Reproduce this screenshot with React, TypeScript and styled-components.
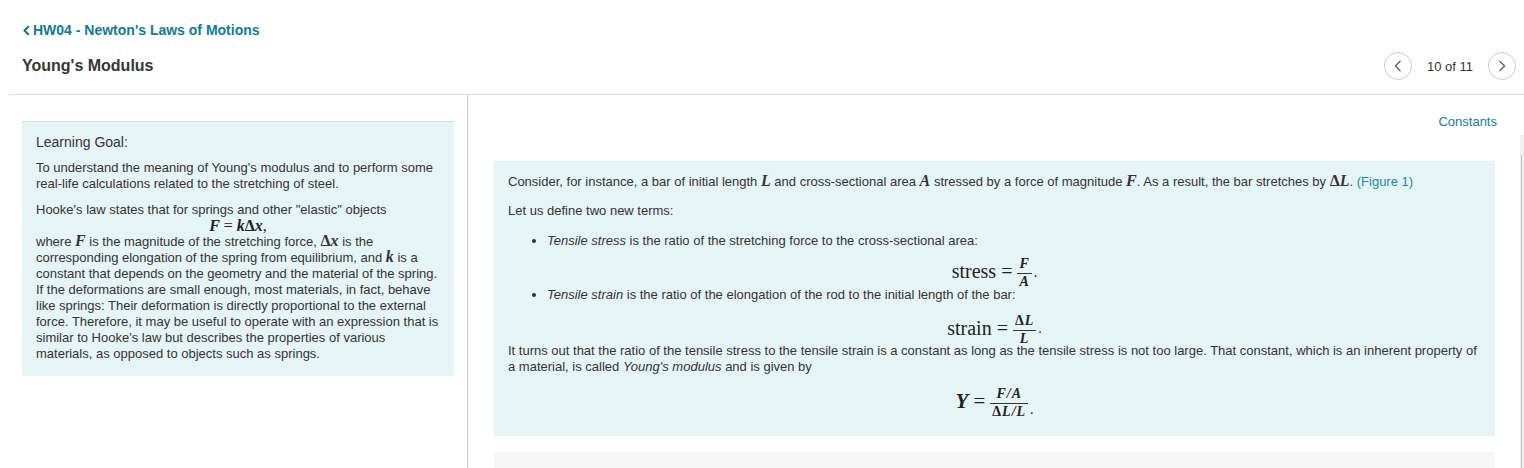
import React from "react";
import styled, { createGlobalStyle } from "styled-components";

const GlobalStyle = createGlobalStyle`
  html, body {
    margin: 0;
    padding: 0;
    background: #fff;
  }
  body {
    font-family: "Liberation Sans", Arial, sans-serif;
    color: #333;
    overflow: hidden;
  }
`;

const Header = styled.header`
  padding: 20px 8px 14px 21px;
`;

const BackLink = styled.a`
  display: inline-flex;
  align-items: center;
  gap: 1px;
  height: 20px;
  font-size: 14px;
  font-weight: 700;
  color: #0c7b9c;
  text-decoration: none;
`;

const TitleRow = styled.div`
  display: flex;
  align-items: center;
  justify-content: space-between;
  height: 28px;
  margin-top: 12px;
  padding-left: 1px;
`;

const Title = styled.h1`
  margin: 0;
  font-size: 16px;
  font-weight: 700;
  color: #363636;
`;

const Pager = styled.div`
  display: flex;
  align-items: center;
  gap: 15px;
  font-size: 13px;
  color: #333;
`;

const RoundButton = styled.button`
  width: 28px;
  height: 28px;
  padding: 0;
  border: 1px solid #cbcbcb;
  border-radius: 50%;
  background: #fff;
  display: flex;
  align-items: center;
  justify-content: center;
  color: #5a6470;
`;

const Rule = styled.hr`
  margin: 0 0 0 9px;
  border: 0;
  border-top: 1px solid #dcdcdc;
`;

const Main = styled.main`
  display: flex;
  height: 373px;
  overflow: hidden;
`;

const LeftColumn = styled.aside`
  box-sizing: border-box;
  width: 459px;
  margin-left: 9px;
  padding: 26px 13px 0 13px;
  border-right: 1px solid #c5cfda;
`;

const RightColumn = styled.section`
  flex: 1;
  padding: 19px 25px 0 26px;
`;

const ScrollTrack = styled.div`
  width: 4px;
  margin-top: 40px;
  padding-top: 20px;
  background: #f1f1f1;
`;

const ScrollThumb = styled.div`
  width: 1px;
  height: 100%;
  margin-left: 1px;
  background: #c4c4c4;
`;

const InfoBox = styled.div<{ $top?: boolean }>`
  background: #e5f5f6;
  border-top: ${(p) => (p.$top ? "1px solid #dcdcdc" : "0")};
  padding: ${(p) => (p.$top ? "11px 14px 14px" : "13px 14px 12px")};
  font-size: 13px;
  line-height: 16px;
`;

const GoalTitle = styled.h2`
  margin: 0 0 9px;
  font-size: 14px;
  line-height: 18px;
  font-weight: 400;
  color: #333;
`;

const Para = styled.p<{ $gap?: number }>`
  margin: 0 0 ${(p) => p.$gap ?? 0}px;
`;

const ConstantsLink = styled.a`
  display: block;
  text-align: right;
  margin-right: -2px;
  font-size: 13px;
  line-height: 16px;
  color: #127c9e;
  text-decoration: none;
`;

const ProblemBox = styled(InfoBox)`
  margin-top: 31px;
`;

const FigureLink = styled.a`
  color: #1d86ac;
  text-decoration: none;
`;

const List = styled.ul<{ $top: number }>`
  margin: ${(p) => p.$top}px 0 0;
  padding-left: 39px;
  list-style: disc;
`;

const Em = styled.em`
  font-style: italic;
`;

const Var = styled.span<{ $size?: number }>`
  font-family: "Liberation Serif", "Times New Roman", serif;
  font-style: italic;
  font-weight: 700;
  font-size: ${(p) => p.$size ?? 16}px;
  line-height: 0;
`;

const Upright = styled.span<{ $size?: number }>`
  font-family: "Liberation Serif", "Times New Roman", serif;
  font-style: normal;
  font-weight: 700;
  font-size: ${(p) => p.$size ?? 16}px;
  line-height: 0;
`;

const Display = styled.div<{ $height: number; $size: number; $shift: number }>`
  box-sizing: border-box;
  height: ${(p) => p.$height}px;
  padding-top: ${(p) => p.$shift}px;
  display: flex;
  align-items: center;
  justify-content: center;
  gap: 5px;
  font-family: "Liberation Serif", "Times New Roman", serif;
  font-size: ${(p) => p.$size}px;
  line-height: 1;
  color: #222;
`;

const InlineDisplay = styled.div`
  text-align: center;
  font-family: "Liberation Serif", "Times New Roman", serif;
  font-size: 16px;
  line-height: 16px;
  color: #222;
`;

const Frac = styled.span<{ $size: number }>`
  display: inline-flex;
  flex-direction: column;
  align-items: center;
  font-family: "Liberation Serif", "Times New Roman", serif;
  font-style: italic;
  font-weight: 700;
  font-size: ${(p) => p.$size}px;
  line-height: 1.05;
  letter-spacing: 1px;
  margin-top: 4px;
`;

const Num = styled.span`
  padding: 0 2px 1px;
  border-bottom: 1px solid #333;
  align-self: stretch;
  text-align: center;
`;

const Den = styled.span`
  padding: 1px 2px 0;
`;

const Dot = styled.span`
  align-self: flex-end;
  margin-left: -3px;
  margin-bottom: 7px;
  font-size: 14px;
`;

const GrayBlock = styled.div`
  margin-top: 16px;
  height: 40px;
  background: #f7f7f7;
`;

const ChevronLeft = ({ size = 14, stroke = 1.6 }: { size?: number; stroke?: number }) => (
  <svg width={size} height={size} viewBox="0 0 16 16" fill="none">
    <path d="M10.5 2.5 L5 8 L10.5 13.5" stroke="currentColor" strokeWidth={stroke} strokeLinecap="round" strokeLinejoin="round" />
  </svg>
);

const ChevronRight = () => (
  <svg width={14} height={14} viewBox="0 0 16 16" fill="none">
    <path d="M5.5 2.5 L11 8 L5.5 13.5" stroke="currentColor" strokeWidth={1.6} strokeLinecap="round" strokeLinejoin="round" />
  </svg>
);

export default function App() {
  return (
    <>
      <GlobalStyle />
      <Header>
        <BackLink href="#">
          <ChevronLeft size={11} stroke={3.2} />
          HW04 - Newton's Laws of Motions
        </BackLink>
        <TitleRow>
          <Title>Young's Modulus</Title>
          <Pager>
            <RoundButton aria-label="Previous">
              <ChevronLeft />
            </RoundButton>
            <span>10 of 11</span>
            <RoundButton aria-label="Next">
              <ChevronRight />
            </RoundButton>
          </Pager>
        </TitleRow>
      </Header>
      <Rule />
      <Main>
        <LeftColumn>
          <InfoBox $top>
            <GoalTitle>Learning Goal:</GoalTitle>
            <Para $gap={10}>
              To understand the meaning of Young's modulus and to perform some real&#8209;life calculations related
              to the stretching of steel.
            </Para>
            <Para>Hooke's law states that for springs and other "elastic" objects</Para>
            <InlineDisplay>
              <Var>F</Var> = <Var>k</Var>
              <Upright>Δ</Upright>
              <Var>x</Var>,
            </InlineDisplay>
            <Para>
              where <Var>F</Var> is the magnitude of the stretching force, <Upright>Δ</Upright>
              <Var>x</Var> is the corresponding elongation of the spring from equilibrium, and <Var>k</Var> is a
              constant that depends on the geometry and the material of the spring. If the deformations are small
              enough, most materials, in fact, behave like springs: Their deformation is directly proportional to
              the external force. Therefore, it may be useful to operate with an expression that is similar to
              Hooke's law but describes the properties of various materials, as opposed to objects such as springs.
            </Para>
          </InfoBox>
        </LeftColumn>
        <RightColumn>
          <ConstantsLink href="#">Constants</ConstantsLink>
          <ProblemBox>
            <Para $gap={13}>
              Consider, for instance, a bar of initial length <Var>L</Var> and cross-sectional area <Var>A</Var>{" "}
              stressed by a force of magnitude <Var>F</Var>. As a result, the bar stretches by{" "}
              <Upright>Δ</Upright>
              <Var>L</Var>. <FigureLink href="#">(Figure 1)</FigureLink>
            </Para>
            <Para>Let us define two new terms:</Para>
            <List $top={14}>
              <li>
                <Em>Tensile stress</Em> is the ratio of the stretching force to the cross-sectional area:
              </li>
            </List>
            <Display $height={38} $size={20} $shift={6}>
              <span>stress =</span>
              <Frac $size={14}>
                <Num>F</Num>
                <Den>A</Den>
              </Frac>
              <Dot>.</Dot>
            </Display>
            <List $top={0}>
              <li>
                <Em>Tensile strain</Em> is the ratio of the elongation of the rod to the initial length of the bar:
              </li>
            </List>
            <Display $height={40} $size={20} $shift={10}>
              <span>strain =</span>
              <Frac $size={14}>
                <Num>
                  <Upright $size={14}>Δ</Upright>L
                </Num>
                <Den>L</Den>
              </Frac>
              <Dot>.</Dot>
            </Display>
            <Para>
              It turns out that the ratio of the tensile stress to the tensile strain is a constant as long as the
              tensile stress is not too large. That constant, which is an inherent property of a material, is called{" "}
              <Em>Young's modulus</Em> and is given by
            </Para>
            <Display $height={49} $size={21} $shift={4}>
              <span>
                <Var $size={21}>Y</Var> =
              </span>
              <Frac $size={14}>
                <Num>F/A</Num>
                <Den>
                  <Upright $size={14}>Δ</Upright>L/L
                </Den>
              </Frac>
              <Dot>.</Dot>
            </Display>
          </ProblemBox>
          <GrayBlock />
        </RightColumn>
        <ScrollTrack>
          <ScrollThumb />
        </ScrollTrack>
      </Main>
    </>
  );
}
